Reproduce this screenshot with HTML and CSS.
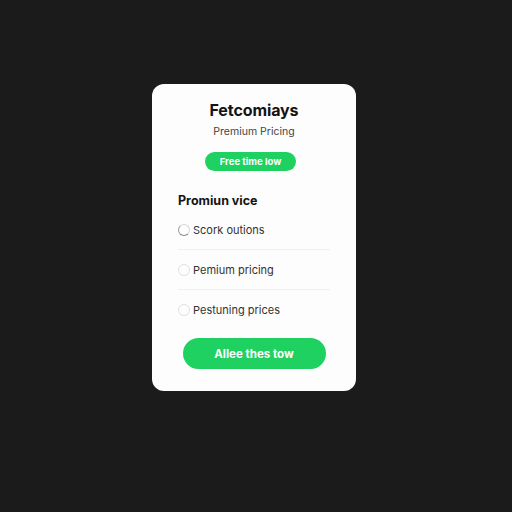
FILE: index.html
```html
<!DOCTYPE html>
<html lang="en">
<head>
<meta charset="utf-8">
<title>Fetcomiays</title>
<link rel="stylesheet" href="styles.css">
</head>
<body>
  <main class="stage">
    <section class="card">
      <h1 class="title">Fetcomiays</h1>
      <p class="subtitle">Premium Pricing</p>
      <div class="pill-row"><span class="pill">Free time low</span></div>
      <h2 class="heading">Promiun vice</h2>
      <ul class="options">
        <li class="option"><span class="radio radio-first"></span><span>Scork outions</span></li>
        <li class="option"><span class="radio"></span><span>Pemium pricing</span></li>
        <li class="option"><span class="radio"></span><span>Pestuning prices</span></li>
      </ul>
      <div class="cta-row"><button class="cta">Allee thes tow</button></div>
    </section>
  </main>
</body>
</html>
```
FILE: styles.css
```css
* { box-sizing: border-box; }

html, body {
  margin: 0;
  height: 100%;
  background: #1b1b1b;
}

body {
  font-family: Inter, "Open Sans", sans-serif;
}

.stage {
  padding: 84px 0 0 152px;
}

.card {
  width: 204px;
  height: 307px;
  background: #fdfdfd;
  border-radius: 12px;
  padding: 16px 26px 22px;
  display: flex;
  flex-direction: column;
}

.title {
  margin: 0;
  font-size: 16px;
  line-height: 20px;
  font-weight: 700;
  color: #141414;
  text-align: center;
  letter-spacing: -0.1px;
}

.subtitle {
  margin: 5px 0 0;
  font-size: 10.5px;
  line-height: 14px;
  color: #444;
  text-align: center;
}

.pill-row {
  display: flex;
  justify-content: center;
  margin-top: 13px;
  padding-right: 7px;
}

.pill {
  display: flex;
  align-items: center;
  justify-content: center;
  width: 91px;
  height: 19px;
  border-radius: 10px;
  background: #1ed160;
  color: #fff;
  font-size: 9.5px;
  font-weight: 700;
}

.heading {
  margin: 22px 0 0;
  font-size: 12.5px;
  line-height: 16px;
  font-weight: 700;
  color: #141414;
}

.options {
  list-style: none;
  margin: 1px 0 0;
  padding: 0;
}

.option {
  display: flex;
  align-items: center;
  gap: 3px;
  height: 40px;
  border-bottom: 1px solid #efefef;
  font-size: 11px;
  color: #333;
}

.option:last-child {
  border-bottom: none;
  height: 39px;
}

.radio {
  width: 12px;
  height: 12px;
  border-radius: 50%;
  border: 1px solid #e0e0e0;
}

.radio-first {
  border-color: #d6d6d6;
  border-bottom-color: #8a8a8a;
  border-left-color: #9a9a9a;
}

.cta-row {
  display: flex;
  justify-content: center;
  margin-top: 9px;
}

.cta {
  width: 143px;
  height: 31px;
  border: none;
  border-radius: 16px;
  background: #1ed160;
  color: #fff;
  font-family: inherit;
  font-size: 11.5px;
  font-weight: 700;
}
```
